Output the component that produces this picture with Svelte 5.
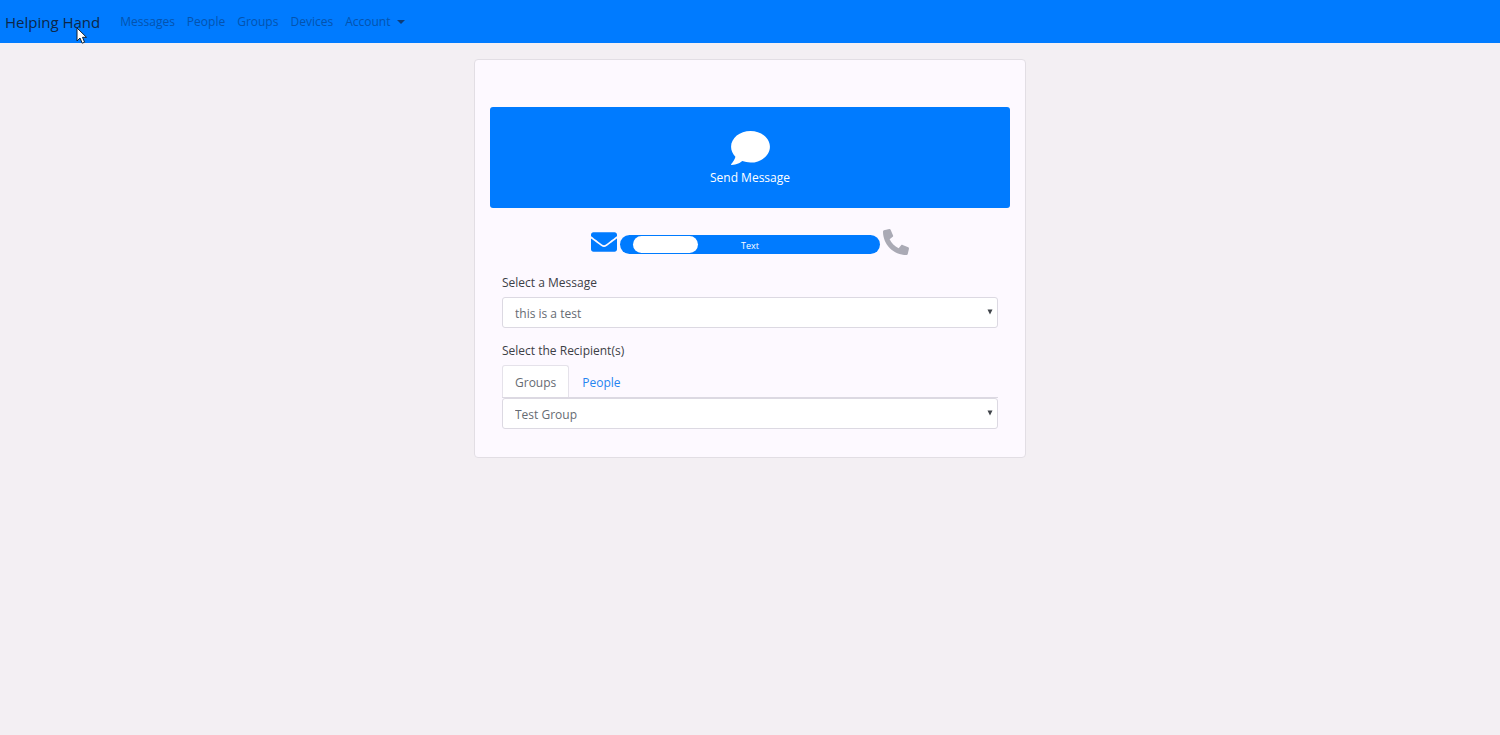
<script lang="ts">
  const links = ['Messages', 'People', 'Groups', 'Devices'];
  const modes = ['Text', 'Both', 'Call'];

  let mode = $state(0);
  let tab = $state('Groups');
  let message = $state('this is a test');
  let recipient = $state('Test Group');
</script>

{#snippet arrow()}
  <svg class="arrow" viewBox="0 0 6 6" aria-hidden="true"><path d="M0.5 0.5h5L3 5.5z" /></svg>
{/snippet}

<nav class="navbar">
  <a class="brand" href="#home">Helping Hand</a>
  <div class="nav-links">
    {#each links as link}
      <a class="nav-link" href="#{link.toLowerCase()}">{link}</a>
    {/each}
    <button class="nav-link" type="button">Account <span class="caret"></span></button>
  </div>
  <svg class="pointer" viewBox="0 0 12 18" aria-hidden="true">
    <path d="M1 1v13l3-3 2.200 5.200 2.400-1L6.500 10.300h4z" fill="#fff" stroke="#123" stroke-width="1" />
  </svg>
</nav>

<main class="card">
  <button class="send" type="button">
    <svg class="comment" viewBox="0 32 512 448" aria-hidden="true">
      <path d="M256 32C114.600 32 0 125.100 0 240c0 49.600 21.400 95 57 130.700C44.500 421.100 2.700 466 2.200 466.500c-2.200 2.300-2.800 5.700-1.500 8.700S4.800 480 8 480c66.300 0 116-31.800 140.600-51.400 32.700 12.300 69 19.400 107.400 19.400 141.400 0 256-93.100 256-208S397.400 32 256 32z" />
    </svg>
    Send Message
  </button>

  <div class="mode">
    <svg class="mode-icon active" viewBox="0 0 512 512" aria-hidden="true">
      <path d="M502.300 190.800c3.900-3.100 9.700-.2 9.700 4.700V400c0 26.500-21.500 48-48 48H48c-26.500 0-48-21.500-48-48V195.600c0-5 5.700-7.800 9.700-4.700 22.400 17.400 52.100 39.500 154.100 113.600 21.100 15.400 56.700 47.800 92.200 47.600 35.700.3 72-32.800 92.300-47.600 102-74.100 131.600-96.300 154-113.700zM256 320c23.200.4 56.600-29.200 73.400-41.400 132.700-96.300 142.800-104.700 173.400-128.700 5.800-4.500 9.200-11.500 9.200-18.900v-19c0-26.500-21.500-48-48-48H48c-26.500 0-48 21.500-48 48v19c0 7.400 3.400 14.300 9.200 18.900 30.600 23.900 40.700 32.400 173.400 128.700 16.800 12.200 50.200 41.800 73.400 41.400z" />
    </svg>
    <div class="slider">
      <input id="mode" type="range" min="0" max="2" aria-label="Delivery mode" bind:value={mode} />
      <label class="slider-label" for="mode">{modes[mode]}</label>
    </div>
    <svg class="mode-icon" viewBox="0 0 512 512" aria-hidden="true">
      <path transform="matrix(-1 0 0 1 512 0)" d="M493.400 24.600l-104-24c-11.300-2.600-22.900 3.300-27.500 13.900l-48 112c-4.200 9.800-1.400 21.300 6.900 28l60.600 49.600c-36 76.700-98.900 140.500-177.200 177.200l-49.600-60.600c-6.800-8.300-18.200-11.100-28-6.900l-112 48C3.900 366.500-2 378.100.6 389.400l24 104C27.100 504.200 36.700 512 48 512c256.100 0 464-207.500 464-464 0-11.200-7.700-20.900-18.600-23.400z" />
    </svg>
  </div>

  <div class="fields">
    <label class="label" for="message">Select a Message</label>
    <div class="select">
      <select id="message" bind:value={message}>
        <option>this is a test</option>
      </select>
      {@render arrow()}
    </div>

    <label class="label recipients" for="recipient">Select the Recipient(s)</label>
    <div class="tabs" role="tablist">
      {#each ['Groups', 'People'] as name}
        <button
          class="tab"
          class:selected={tab === name}
          type="button"
          role="tab"
          aria-selected={tab === name}
          onclick={() => (tab = name)}
        >{name}</button>
      {/each}
    </div>
    <div class="select">
      <select id="recipient" bind:value={recipient}>
        <option>Test Group</option>
      </select>
      {@render arrow()}
    </div>
  </div>
</main>

<style>
  :global(body) {
    margin: 0;
    background: #f3eff3;
    color: #3c4046;
    font-family: 'Open Sans', 'Noto Sans', sans-serif;
    font-size: 12px;
    line-height: 20px;
  }

  button, select {
    font: inherit;
    cursor: pointer;
  }

  .navbar {
    position: relative;
    display: flex;
    align-items: center;
    gap: 14px;
    height: 43px;
    padding: 0 5px;
    background: #007bff;
  }

  .brand {
    color: #0d2748;
    font-size: 15px;
    text-decoration: none;
  }

  .nav-links { display: flex; }

  .nav-link {
    display: flex;
    align-items: center;
    gap: 7px;
    padding: 0 6px;
    border: 0;
    background: none;
    color: #0453ae;
    text-decoration: none;
  }

  .caret {
    border: 4px solid transparent;
    border-top-color: #0d3c78;
    border-bottom: 0;
  }

  .pointer {
    position: absolute;
    top: 27px;
    left: 76px;
    width: 12px;
    height: 18px;
    pointer-events: none;
  }

  .card {
    box-sizing: border-box;
    max-width: 552px;
    margin: 16px auto;
    padding: 47px 15px 28px;
    border: 1px solid #e2dee4;
    border-radius: 4px;
    background: #fdf9ff;
  }

  .send {
    display: flex;
    flex-direction: column;
    align-items: center;
    gap: 3px;
    width: 100%;
    padding: 24px 12px 20px;
    border: 0;
    border-radius: 3px;
    background: #007bff;
    color: #fff;
  }

  .comment {
    width: 39px;
    height: 34px;
    fill: #fff;
  }

  .mode {
    display: flex;
    justify-content: center;
    gap: 3px;
    margin-top: 21px;
  }

  .mode-icon {
    width: 26px;
    height: 26px;
    fill: #aaaab5;
  }
  .mode-icon.active { fill: #007bff; }

  .slider {
    position: relative;
    width: 50%;
    margin-top: 6px;
  }

  .slider input {
    display: block;
    box-sizing: border-box;
    width: 100%;
    height: 19px;
    margin: 0;
    padding: 0 13px;
    border-radius: 10px;
    background: #007bff;
    appearance: none;
  }

  .slider input::-webkit-slider-thumb {
    width: 65px;
    height: 17px;
    border-radius: 9px;
    background: #fff;
    appearance: none;
  }

  .slider-label {
    position: absolute;
    inset: 0;
    color: #fff;
    font-size: 9px;
    line-height: 22px;
    text-align: center;
    pointer-events: none;
  }

  .fields { padding: 18px 12px 0; }

  .label {
    display: block;
    margin-bottom: 4px;
  }
  .recipients { margin-top: 13px; }

  .select { position: relative; }

  select {
    display: block;
    width: 100%;
    height: 31px;
    padding: 2px 12px 0;
    border: 1px solid #dcd9e2;
    border-radius: 3px;
    background: #fff;
    color: #666b73;
    appearance: none;
  }

  .arrow {
    position: absolute;
    top: 12px;
    right: 5px;
    width: 6px;
    height: 6px;
    fill: #40444a;
    pointer-events: none;
  }

  .tabs {
    display: flex;
    border-bottom: 1px solid #dcd9e2;
  }

  .tab {
    height: 32px;
    padding: 2px 12px 0;
    border: 1px solid transparent;
    border-bottom: 0;
    border-radius: 3px 3px 0 0;
    background: none;
    color: #2684f0;
  }

  .tab.selected {
    border-color: #e5e2ea;
    background: #fff;
    color: #666b73;
  }
</style>
